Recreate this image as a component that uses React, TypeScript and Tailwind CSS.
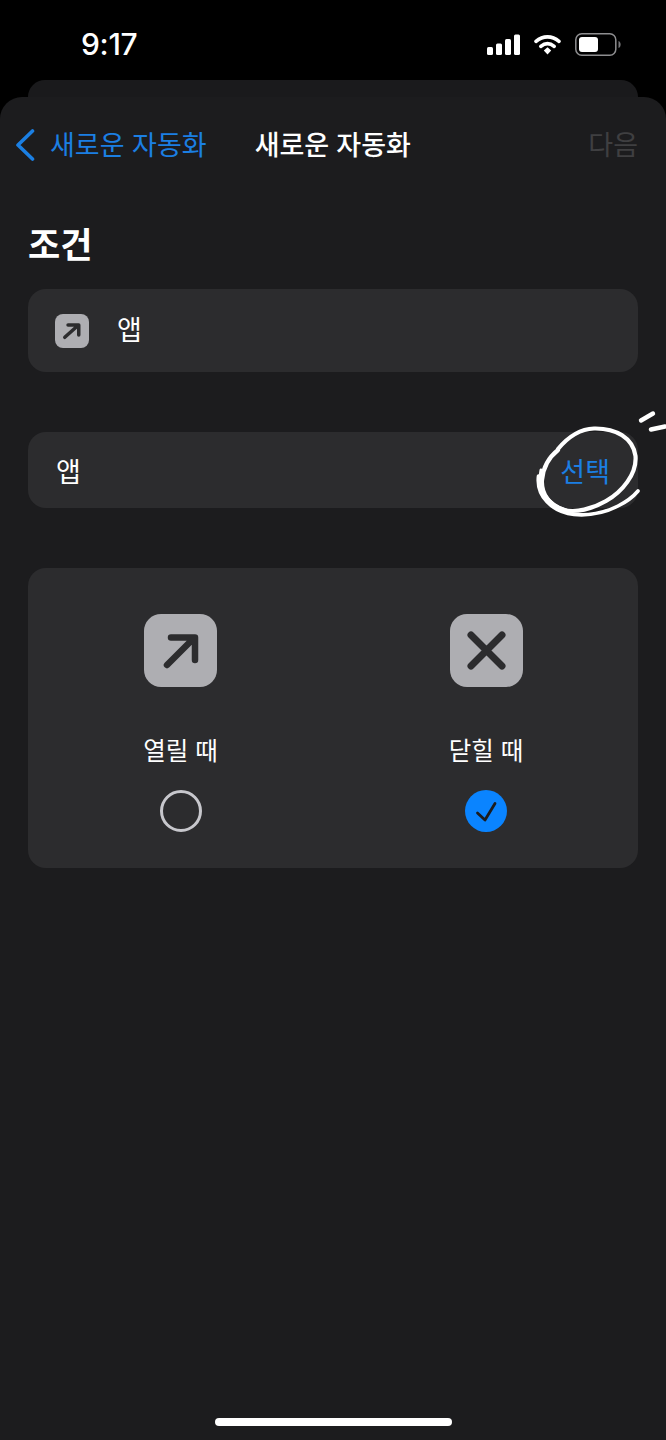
import React from 'react';

const font = "font-['Inter','Noto_Sans_CJK_KR',sans-serif]";

const StatusIcons = () => (
  <div className="flex items-center">
    <svg width="34" height="22" viewBox="0 0 34 22" fill="#fff" className="mr-[13px]">
      <rect x="0" y="13" width="6" height="8" rx="1.5" />
      <rect x="9" y="9.5" width="6" height="11.5" rx="1.5" />
      <rect x="18" y="5" width="6" height="16" rx="1.5" />
      <rect x="27" y="0.5" width="6" height="20.5" rx="1.5" />
    </svg>
    <svg width="28" height="22" viewBox="0 0 28 22" fill="none" className="mr-[13px]">
      <path d="M2 7.4C9 1.4 18 1.4 25 7.4" stroke="#fff" strokeWidth="3.6" strokeLinecap="round" />
      <path d="M6.8 12.4C11 8.8 16 8.8 20.2 12.4" stroke="#fff" strokeWidth="3.6" strokeLinecap="round" />
      <path d="M9.8 16.4L13.5 13.2L17.2 16.4L13.5 20.6Z" fill="#fff" />
    </svg>
    <svg width="46" height="23" viewBox="0 0 46 23" fill="none">
      <rect x="0.8" y="0.8" width="40" height="21.4" rx="6" stroke="#8e8e90" strokeWidth="1.5" />
      <rect x="4" y="4" width="19" height="15" rx="3" fill="#fff" />
      <path d="M43.5 8V15C45 14.5 45.6 13 45.6 11.5C45.6 10 45 8.5 43.5 8Z" fill="#77777a" />
    </svg>
  </div>
);

const ArrowTile = ({ size }: { size: 'sm' | 'lg' }) => (
  <div
    className={
      size === 'lg'
        ? 'flex h-[73px] w-[73px] items-center justify-center rounded-[17px] bg-[#aeaeb2]'
        : 'flex h-[34px] w-[34px] items-center justify-center rounded-[8px] bg-[#aeaeb2]'
    }
  >
    <svg viewBox="0 0 73 73" fill="none" className="h-full w-full">
      <path
        d={size === 'lg' ? 'M23 51L50 24M27 23.5H51V46' : 'M21 50L50 24M28 23.5H51V45'}
        stroke="#2c2c2e"
        strokeWidth={size === 'lg' ? 6.5 : 7.5}
        strokeLinecap="round"
        strokeLinejoin="round"
      />
    </svg>
  </div>
);

const CloseTile = () => (
  <div className="flex h-[73px] w-[73px] items-center justify-center rounded-[17px] bg-[#aeaeb2]">
    <svg viewBox="0 0 73 73" fill="none" className="h-full w-full">
      <path d="M21 21L52 52M52 21L21 52" stroke="#2c2c2e" strokeWidth="7" strokeLinecap="round" />
    </svg>
  </div>
);

const Scribble = () => (
  <svg
    viewBox="0 0 166 130"
    width="166"
    height="130"
    fill="none"
    className="pointer-events-none absolute left-[500px] top-[400px]"
  >
    <path
      d="M58 49C68 37 80 29 94 28.5C116 28 133 38 135.5 56C137 74 122 92 106 101C92 109 76 113 64 110C50 106 41 94 42 80C43 68 48 58 58 50"
      stroke="#fff"
      strokeWidth="4.2"
      strokeLinecap="round"
    />
    <path
      d="M38.5 76C36 96 52 112 74 114.5C90 116 106 112 118 106C126 102 133 97 138 91"
      stroke="#fff"
      strokeWidth="3.6"
      strokeLinecap="round"
    />
    <path
      d="M41 70C37 90 48 104 66 110"
      stroke="#fff"
      strokeWidth="3"
      strokeLinecap="round"
    />
    <path d="M141 20.5L153 13.5" stroke="#fff" strokeWidth="4.4" strokeLinecap="round" />
    <path d="M151 29.5L165 26.5" stroke="#fff" strokeWidth="4.4" strokeLinecap="round" />
  </svg>
);

const App: React.FC = () => {
  return (
    <div className={`${font} relative flex h-[1440px] w-[666px] flex-col overflow-hidden bg-black text-white`}>
      {/* Status bar */}
      <div className="flex h-[80px] shrink-0 items-start justify-between pl-[81px] pr-[45px] pt-[33px]">
        <span className="text-[30px] font-medium leading-[22px] tracking-[-0.3px]">9:17</span>
        <StatusIcons />
      </div>

      {/* Sheet behind */}
      <div className="mx-[28px] h-[17px] shrink-0 rounded-t-[20px] bg-[#1a1a1c]" />

      {/* Front sheet */}
      <div className="flex flex-1 flex-col rounded-t-[22px] bg-[#1c1c1e]">
        {/* Nav */}
        <div className="mt-[33px] flex h-[32px] items-center pl-[15px] pr-[28px]">
          <div className="flex items-center gap-[15px]">
            <svg width="20" height="32" viewBox="0 0 20 32" fill="none" className="-mt-[2px]">
              <path
                d="M17.5 2L3 16L17.5 30"
                stroke="#1b7fe3"
                strokeWidth="3.6"
                strokeLinecap="round"
                strokeLinejoin="round"
              />
            </svg>
            <span className="text-[27px] leading-[32px] text-[#1b7fe3]">새로운 자동화</span>
          </div>
          <span className="ml-[48px] text-[27px] font-medium leading-[32px]">새로운 자동화</span>
          <span className="ml-auto text-[27px] leading-[32px] text-[#3f3f41]">다음</span>
        </div>

        <div className="flex flex-col px-[28px]">
          <h1 className="mt-[63px] text-[35px] font-bold leading-[40px]">조건</h1>

          <div className="mt-[24px] flex h-[83px] items-center gap-[28px] rounded-[18px] bg-[#2c2c2e] pl-[27px]">
            <ArrowTile size="sm" />
            <span className="mt-[1px] text-[27px] leading-[32px]">앱</span>
          </div>

          <div className="mt-[60px] flex h-[76px] items-center justify-between rounded-[18px] bg-[#2c2c2e] pl-[28px] pr-[28px]">
            <span className="mt-[5px] text-[27px] leading-[32px]">앱</span>
            <span className="mt-[5px] text-[27px] leading-[32px] text-[#1b7fe3]">선택</span>
          </div>

          <div className="mt-[60px] grid h-[300px] grid-cols-2 rounded-[18px] bg-[#2c2c2e] pt-[46px]">
            <div className="flex flex-col items-center">
              <ArrowTile size="lg" />
              <span className="mt-[47px] text-[24.5px] leading-[34px]">열릴 때</span>
              <div className="mt-[22px] h-[42px] w-[42px] rounded-full border-[3px] border-[#c7c7cc]" />
            </div>
            <div className="flex flex-col items-center pl-[1px]">
              <CloseTile />
              <span className="mt-[47px] text-[24.5px] leading-[34px]">닫힐 때</span>
              <div className="mt-[22px] flex h-[42px] w-[42px] items-center justify-center rounded-full bg-[#0a84ff]">
                <svg width="24" height="24" viewBox="0 0 24 24" fill="none">
                  <path
                    d="M3.5 14L11 21L21 4.5"
                    stroke="#1c1c1e"
                    strokeWidth="2.8"
                    strokeLinecap="round"
                    strokeLinejoin="round"
                  />
                </svg>
              </div>
            </div>
          </div>
        </div>

        {/* Home indicator */}
        <div className="mt-auto mb-[14px] h-[8px] w-[237px] self-center rounded-full bg-white" />
      </div>

      <Scribble />
    </div>
  );
};

export default App;
